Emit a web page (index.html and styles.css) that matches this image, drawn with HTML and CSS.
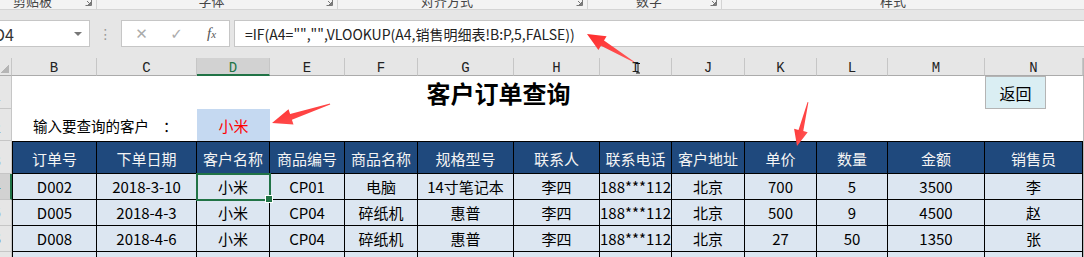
FILE: index.html
```html
<!DOCTYPE html>
<html lang="zh-CN">
<head>
  <meta charset="UTF-8" />
  <title>客户订单查询</title>
  <link rel="stylesheet" href="styles.css">
</head>
<body>

  <div class="ribbon">
    <div class="group g1"><span class="label">剪贴板</span><svg class="launch" width="7" height="7"><path d="M0.5 6.5h6v-6M2 2l3.5 3.5M5.5 3v2.5H3" stroke="#777" fill="none"/></svg></div>
    <div class="group g2"><span class="label">字体</span><svg class="launch" width="7" height="7"><path d="M0.5 6.5h6v-6M2 2l3.5 3.5M5.5 3v2.5H3" stroke="#777" fill="none"/></svg></div>
    <div class="group g3"><span class="label">对齐方式</span><svg class="launch" width="7" height="7"><path d="M0.5 6.5h6v-6M2 2l3.5 3.5M5.5 3v2.5H3" stroke="#777" fill="none"/></svg></div>
    <div class="group g4"><span class="label">数字</span><svg class="launch" width="7" height="7"><path d="M0.5 6.5h6v-6M2 2l3.5 3.5M5.5 3v2.5H3" stroke="#777" fill="none"/></svg></div>
    <div class="group g5"><span class="label">样式</span></div>
  </div>

  <div class="fbar">
    <div class="namebox"><span class="ref">D4</span><span class="caret"></span></div>
    <div class="grip">⋮</div>
    <div class="fnbtns"><span>✕</span><span>✓</span><span class="fx">f<small>x</small></span></div>
    <div class="formula">=IF(A4="","",VLOOKUP(A4,销售明细表!B:P,5,FALSE))</div>
  </div>

  <div class="sheet">
    <!-- column headers -->
    <div class="ch corner"></div>
    <div class="ch">B</div>
    <div class="ch">C</div>
    <div class="ch on">D</div>
    <div class="ch">E</div>
    <div class="ch">F</div>
    <div class="ch">G</div>
    <div class="ch">H</div>
    <div class="ch">I</div>
    <div class="ch">J</div>
    <div class="ch">K</div>
    <div class="ch">L</div>
    <div class="ch">M</div>
    <div class="ch">N</div>
    <div class="ch end"></div>

    <!-- row 1 -->
    <div class="rn"><span>1</span></div>
    <div class="title">客户订单查询</div>
    <div class="btncell"><div class="back">返回</div></div>
    <div class="tail"></div>

    <!-- row 2 -->
    <div class="rn"><span>2</span></div>
    <div class="ask">输入要查询的客户<span class="colon">：</span></div>
    <div class="pick">小米</div>
    <div class="blank"></div>
    <div class="tail"></div>

    <!-- row 3 -->
    <div class="rn"><span>3</span></div>
    <div class="th first">订单号</div>
    <div class="th">下单日期</div>
    <div class="th">客户名称</div>
    <div class="th">商品编号</div>
    <div class="th">商品名称</div>
    <div class="th">规格型号</div>
    <div class="th">联系人</div>
    <div class="th">联系电话</div>
    <div class="th">客户地址</div>
    <div class="th">单价</div>
    <div class="th">数量</div>
    <div class="th">金额</div>
    <div class="th">销售员</div>
    <div class="tail"></div>

    <!-- row 4 -->
    <div class="rn on"><span>4</span></div>
    <div class="td first">D002</div>
    <div class="td">2018-3-10</div>
    <div class="td sel">小米</div>
    <div class="td">CP01</div>
    <div class="td">电脑</div>
    <div class="td">14寸笔记本</div>
    <div class="td">李四</div>
    <div class="td clip">188***1122</div>
    <div class="td">北京</div>
    <div class="td">700</div>
    <div class="td">5</div>
    <div class="td">3500</div>
    <div class="td">李</div>
    <div class="tail"></div>

    <!-- row 5 -->
    <div class="rn"><span>5</span></div>
    <div class="td first">D005</div>
    <div class="td">2018-4-3</div>
    <div class="td">小米</div>
    <div class="td">CP04</div>
    <div class="td">碎纸机</div>
    <div class="td">惠普</div>
    <div class="td">李四</div>
    <div class="td clip">188***1122</div>
    <div class="td">北京</div>
    <div class="td">500</div>
    <div class="td">9</div>
    <div class="td">4500</div>
    <div class="td">赵</div>
    <div class="tail"></div>

    <!-- row 6 -->
    <div class="rn"><span>6</span></div>
    <div class="td first">D008</div>
    <div class="td">2018-4-6</div>
    <div class="td">小米</div>
    <div class="td">CP04</div>
    <div class="td">碎纸机</div>
    <div class="td">惠普</div>
    <div class="td">李四</div>
    <div class="td clip">188***1122</div>
    <div class="td">北京</div>
    <div class="td">27</div>
    <div class="td">50</div>
    <div class="td">1350</div>
    <div class="td">张</div>
    <div class="tail"></div>

    <!-- row 7 (cut off) -->
    <div class="rn"></div>
    <div class="td first"></div>
    <div class="td"></div>
    <div class="td"></div>
    <div class="td"></div>
    <div class="td"></div>
    <div class="td"></div>
    <div class="td"></div>
    <div class="td"></div>
    <div class="td"></div>
    <div class="td"></div>
    <div class="td"></div>
    <div class="td"></div>
    <div class="td"></div>
    <div class="tail"></div>
  </div>

  <!-- annotation arrows drawn over the sheet -->
  <svg class="arrows" width="1084" height="257">
    <defs>
      <linearGradient id="red" x1="0" y1="0" x2="1" y2="1">
        <stop offset="0" stop-color="#ff2d2d"/>
        <stop offset="1" stop-color="#ff5a5a"/>
      </linearGradient>
    </defs>
    <polygon fill="url(#red)" points="587,34 606.6,36.3 604,40.6 634.3,61.8 633.7,62.2 601,45.8 598.4,50.1"/>
    <polygon fill="url(#red)" points="272,123 288.5,109.2 290.1,113.9 330,103.6 330.2,104.4 291.9,119.7 293.5,124.4"/>
    <polygon fill="url(#red)" points="797,146 794.1,128.8 798.5,129.9 807.6,102 808.4,102.2 803.3,131.1 807.7,132.2"/>
    <path d="M636 63.5h4M638 63.5v9.5M636 73h4" stroke="#111" stroke-width="1" fill="none"/>
  </svg>

</body>
</html>
```

FILE: styles.css
```css
  * {
    margin: 0;
    padding: 0;
    box-sizing: border-box;
  }

  body {
    width: 1084px;
    height: 257px;
    overflow: hidden;
    position: relative;
    background: #fff;
    font-family: "Noto Sans CJK SC", sans-serif;
    color: #000;
  }

  /* ribbon group captions, cut off at the top */
  .ribbon {
    display: flex;
    height: 10px;
    background: #f3f3f3;
    border-bottom: 1px solid #d4d4d4;
    overflow: hidden;
  }

  .group {
    display: flex;
    align-items: flex-end;
    height: 9px;
    padding: 0 4px 2px 0;
    border-right: 1px solid #d4d4d4;
    font-size: 13px;
    line-height: 13px;
    color: #444;
  }

  .group .label {
    flex: 1;
    text-align: center;
  }

  .group .launch {
    margin-bottom: 1px;
  }

  .g1 { width: 97px; }
  .g1 .label { padding-right: 20px; }
  .g2 { width: 241px; }
  .g3 { width: 250px; }
  .g3 .label { padding-right: 20px; }
  .g4 { width: 134px; }
  .g5 { flex: 1; border-right: none; padding-right: 0; }
  .g5 .label { padding-right: 20px; }

  /* formula bar */
  .fbar {
    display: flex;
    align-items: flex-start;
    height: 48px;
    padding-top: 10px;
    background: #e6e6e6;
  }

  .namebox {
    width: 90px;
    height: 27px;
    background: #fff;
    border: 1px solid #c6c6c6;
    border-left: none;
    display: flex;
    align-items: center;
    justify-content: space-between;
    padding-right: 7px;
    font-size: 16px;
    color: #333;
  }

  .namebox .ref {
    margin-left: -6px;
  }

  .caret {
    border-left: 4px solid transparent;
    border-right: 4px solid transparent;
    border-top: 4px solid #777;
  }

  .grip {
    width: 31px;
    height: 27px;
    display: flex;
    align-items: center;
    justify-content: center;
    font-family: "DejaVu Sans", sans-serif;
    font-size: 14px;
    color: #9a9a9a;
  }

  .fnbtns {
    width: 109px;
    height: 27px;
    background: #fff;
    border: 1px solid #c6c6c6;
    display: flex;
    align-items: center;
    padding-left: 2px;
  }

  .fnbtns span {
    width: 35px;
    text-align: center;
    font-family: "DejaVu Sans", sans-serif;
    font-size: 15px;
    color: #ababab;
  }

  .fnbtns .fx {
    font-family: "Liberation Serif", serif;
    font-style: italic;
    font-size: 15px;
    color: #555;
  }

  .fx small {
    font-size: 11px;
  }

  .formula {
    flex: 1;
    height: 27px;
    margin-left: 4px;
    background: #fff;
    border: 1px solid #c6c6c6;
    border-right: none;
    padding-left: 10px;
    display: flex;
    align-items: center;
    font-size: 14px;
    color: #222;
    white-space: nowrap;
  }

  /* worksheet */
  .sheet {
    display: grid;
    grid-template-columns: 12px 85px 100px 73px 75px 73px 96px 86px 72px 73px 72px 71px 97px 98px 1fr;
    grid-template-rows: 18px 33px 32px 33px 26px 26px 26px 1fr;
    height: 199px;
  }

  .ch {
    background: #e6e6e6;
    border-right: 1px solid #c6c6c6;
    border-bottom: 1px solid #ababab;
    display: flex;
    align-items: center;
    justify-content: center;
    padding-top: 3px;
    font-family: "Liberation Mono", monospace;
    font-size: 14px;
    line-height: 14px;
    color: #222;
  }

  .ch.on {
    background: #d2d2d2;
    color: #217346;
    border-bottom: 2px solid #217346;
  }

  .ch.corner {
    background: #e6e6e6 linear-gradient(to bottom right, transparent 50%, #b5b5b5 50%) no-repeat right 2px bottom 2px / 9px 9px;
  }

  .ch.end,
  .tail {
    background: #b9b9b9;
    border-right: none;
  }

  .rn {
    background: #e6e6e6;
    border-right: 1px solid #c6c6c6;
    border-bottom: 1px solid #c6c6c6;
    overflow: hidden;
    display: flex;
    align-items: flex-end;
    padding-bottom: 5px;
    font-size: 13px;
    line-height: 15px;
    color: #333;
  }

  .rn span {
    flex: none;
    width: 26px;
    margin-left: -16px;
    text-align: center;
  }

  .rn.on {
    background: #d2d2d2;
    color: #217346;
    border-right: 2px solid #217346;
  }

  .title {
    grid-column: span 12;
    display: flex;
    align-items: center;
    justify-content: center;
    font-size: 24px;
    font-weight: bold;
  }

  .btncell {
    display: flex;
  }

  .back {
    width: 61px;
    background: #daeef3;
    border: 1px solid #b4b4b4;
    display: flex;
    align-items: center;
    justify-content: center;
    font-size: 16px;
  }

  .ask {
    grid-column: span 2;
    display: flex;
    align-items: center;
    padding-left: 21px;
    font-size: 14.5px;
    white-space: nowrap;
  }

  .ask .colon {
    padding-left: 14px;
  }

  .pick {
    background: #c5d9f1;
    color: #ff0000;
    display: flex;
    align-items: center;
    justify-content: center;
    font-size: 15px;
  }

  .blank {
    grid-column: span 10;
  }

  .th,
  .td {
    display: flex;
    align-items: center;
    justify-content: center;
    border-right: 1px solid #000;
    border-bottom: 1px solid #000;
    font-size: 15px;
    white-space: nowrap;
    overflow: hidden;
  }

  .th {
    background: #1f497d;
    color: #f4f4f4;
    border-top: 1px solid #000;
    padding-top: 2px;
  }

  .td {
    background: #dce6f1;
  }

  .th.first,
  .td.first {
    border-left: 1px solid #000;
  }

  .td.clip {
    justify-content: flex-start;
  }

  .td.sel {
    position: relative;
    z-index: 1;
    overflow: visible;
    outline: 2px solid #217346;
    outline-offset: -1px;
  }

  .td.sel::after {
    content: "";
    position: absolute;
    right: -4px;
    bottom: -4px;
    width: 6px;
    height: 6px;
    background: #217346;
    border: 1px solid #fff;
  }

  .arrows {
    position: absolute;
    left: 0;
    top: 0;
    pointer-events: none;
  }
```
